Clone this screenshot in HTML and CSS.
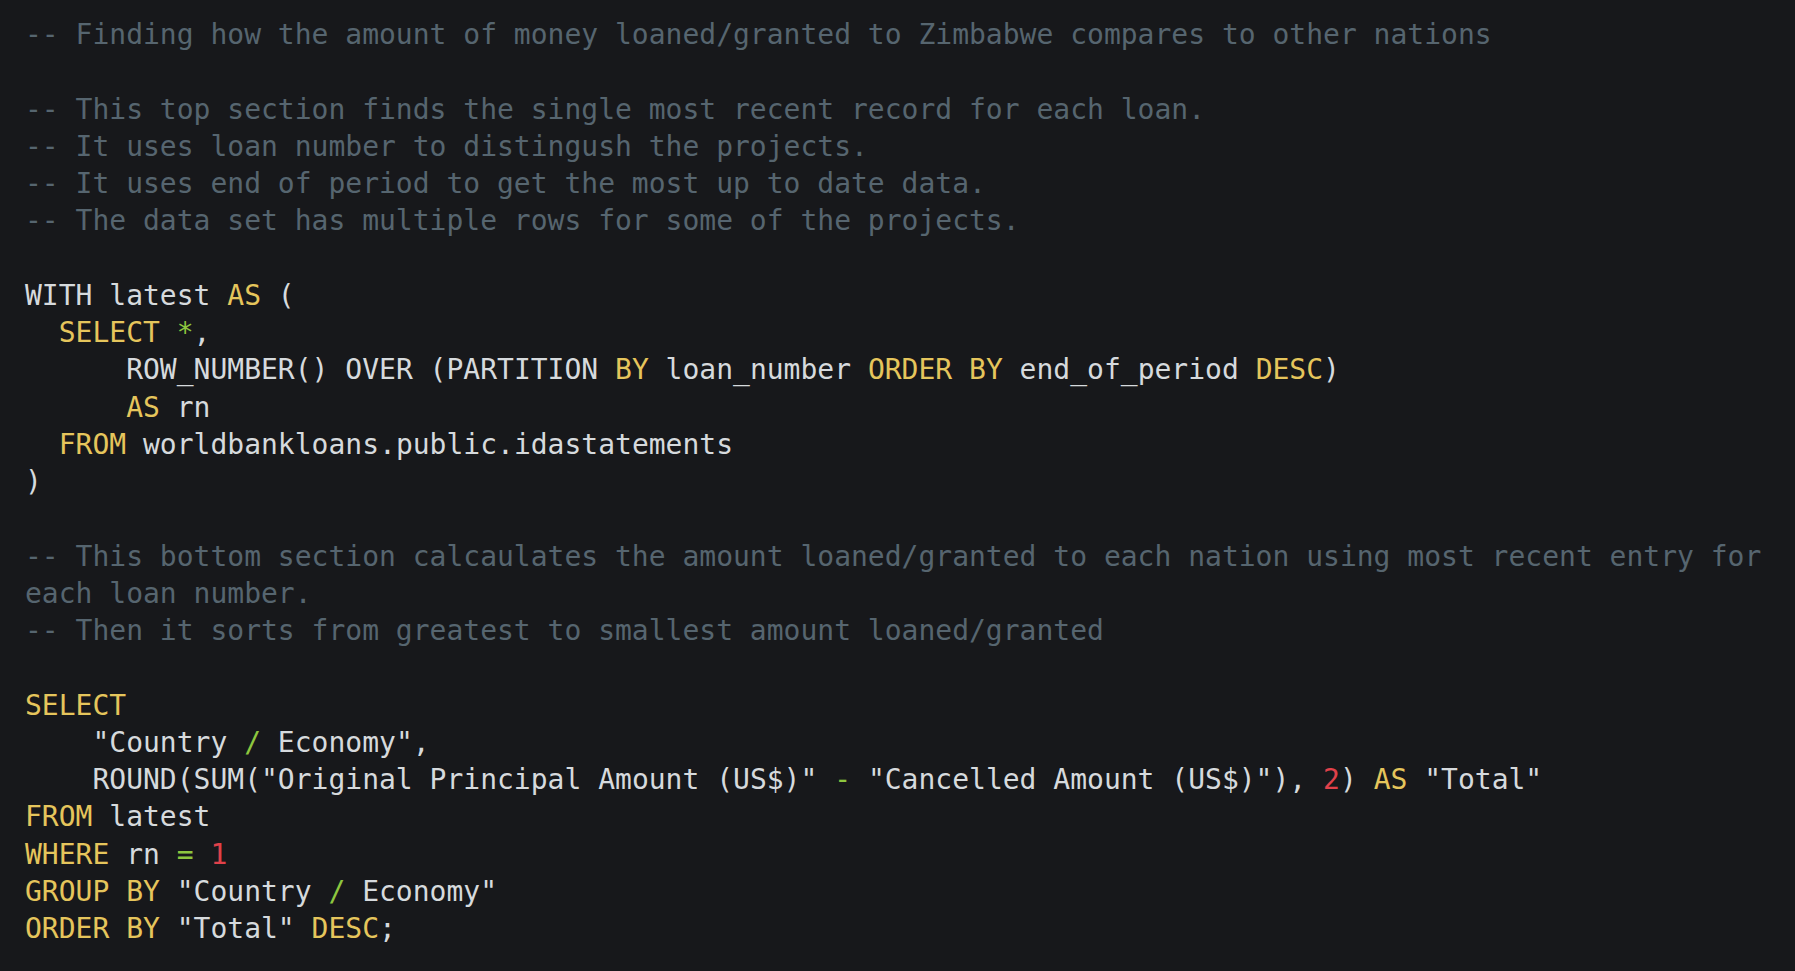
FILE: index.html
```html
<!DOCTYPE html>
<html>
<head>
<meta charset="utf-8">
<link rel="stylesheet" href="styles.css">
</head>
<body>
<pre class="code"><span class="c">-- Finding how the amount of money loaned/granted to Zimbabwe compares to other nations</span>

<span class="c">-- This top section finds the single most recent record for each loan.</span>
<span class="c">-- It uses loan number to distingush the projects.</span>
<span class="c">-- It uses end of period to get the most up to date data.</span>
<span class="c">-- The data set has multiple rows for some of the projects.</span>

WITH latest <span class="k">AS</span> (
  <span class="k">SELECT</span> <span class="o">*</span>,
      ROW_NUMBER() OVER (PARTITION <span class="k">BY</span> loan_number <span class="k">ORDER BY</span> end_of_period <span class="k">DESC</span>)
      <span class="k">AS</span> rn
  <span class="k">FROM</span> worldbankloans.public.idastatements
)

<span class="c">-- This bottom section calcaulates the amount loaned/granted to each nation using most recent entry for each loan number.</span>
<span class="c">-- Then it sorts from greatest to smallest amount loaned/granted</span>

<span class="k">SELECT</span>
    "Country <span class="o">/</span> Economy",
    ROUND(SUM("Original Principal Amount (US$)" <span class="o">-</span> "Cancelled Amount (US$)"), <span class="n">2</span>) <span class="k">AS</span> "Total"
<span class="k">FROM</span> latest
<span class="k">WHERE</span> rn <span class="o">=</span> <span class="n">1</span>
<span class="k">GROUP BY</span> "Country <span class="o">/</span> Economy"
<span class="k">ORDER BY</span> "Total" <span class="k">DESC</span>;</pre>
</body>
</html>
```

FILE: styles.css
```css
html, body {
  margin: 0;
  padding: 0;
  background: #17181b;
  height: 100%;
}

.code {
  margin: 0;
  padding: 16px 0 0 25px;
  font-family: "DejaVu Sans Mono", monospace;
  font-size: 28px;
  line-height: 37.25px;
  color: #d6dadd;
  white-space: pre-wrap;
  word-wrap: break-word;
  box-sizing: border-box;
  width: 1795px;
}

.c { color: #56656f; }
.k { color: #e5c55c; }
.o { color: #8dc63f; }
.n { color: #e0414a; }
```
